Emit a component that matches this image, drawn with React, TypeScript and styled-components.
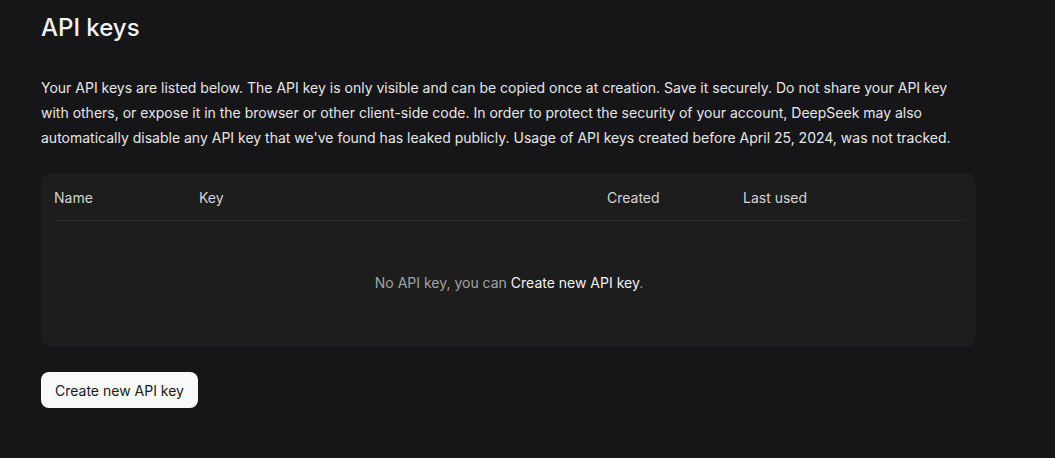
import React from "react";
import styled, { createGlobalStyle } from "styled-components";

const Global = createGlobalStyle`
  html, body { margin: 0; padding: 0; background: #161618; }
  body { font-family: Inter, "Noto Sans", sans-serif; color: #ececec; -webkit-font-smoothing: antialiased; }
`;

const Page = styled.main`
  padding: 12px 0 40px 41px;
  width: 935px;
`;

const Title = styled.h1`
  margin: 0;
  font-size: 24px;
  line-height: 32px;
  font-weight: 500;
  color: #f2f2f2;
`;

const Intro = styled.p`
  margin: 31px 0 0;
  font-size: 14px;
  line-height: 25px;
  color: #e6e6e6;
`;

const Card = styled.section`
  margin-top: 23px;
  background: #1d1d1e;
  border-radius: 10px;
  padding: 0 12px 0 13px;
`;

const HeaderRow = styled.div`
  display: grid;
  grid-template-columns: 145px 408px 136px 1fr;
  padding: 15px 0 12px;
  border-bottom: 1px solid #2c2c2e;
`;

const HeaderCell = styled.div`
  font-size: 14px;
  line-height: 20px;
  color: #d4d4d4;
`;

const Empty = styled.div`
  padding: 52px 0 54px;
  text-align: center;
  font-size: 14px;
  line-height: 20px;
  color: #a3a3a3;
`;

const Link = styled.span`
  color: #f2f2f2;
  cursor: pointer;
`;

const Button = styled.button`
  margin-top: 25px;
  height: 36px;
  padding: 0 14px;
  border: none;
  border-radius: 8px;
  background: #f8f9fb;
  color: #18181a;
  font-family: inherit;
  font-size: 14px;
  cursor: pointer;
`;

export default function App() {
  return (
    <>
      <Global />
      <Page>
        <Title>API keys</Title>
        <Intro>
          Your API keys are listed below. The API key is only visible and can be copied once at creation. Save it securely. Do not share your API key with others, or expose it in the browser or other client-side code. In order to protect the security of your account, DeepSeek may also automatically disable any API key that we've found has leaked publicly. Usage of API keys created before April 25, 2024, was not tracked.
        </Intro>
        <Card>
          <HeaderRow>
            <HeaderCell>Name</HeaderCell>
            <HeaderCell>Key</HeaderCell>
            <HeaderCell>Created</HeaderCell>
            <HeaderCell>Last used</HeaderCell>
          </HeaderRow>
          <Empty>
            No API key, you can <Link>Create new API key</Link>.
          </Empty>
        </Card>
        <Button>Create new API key</Button>
      </Page>
    </>
  );
}
